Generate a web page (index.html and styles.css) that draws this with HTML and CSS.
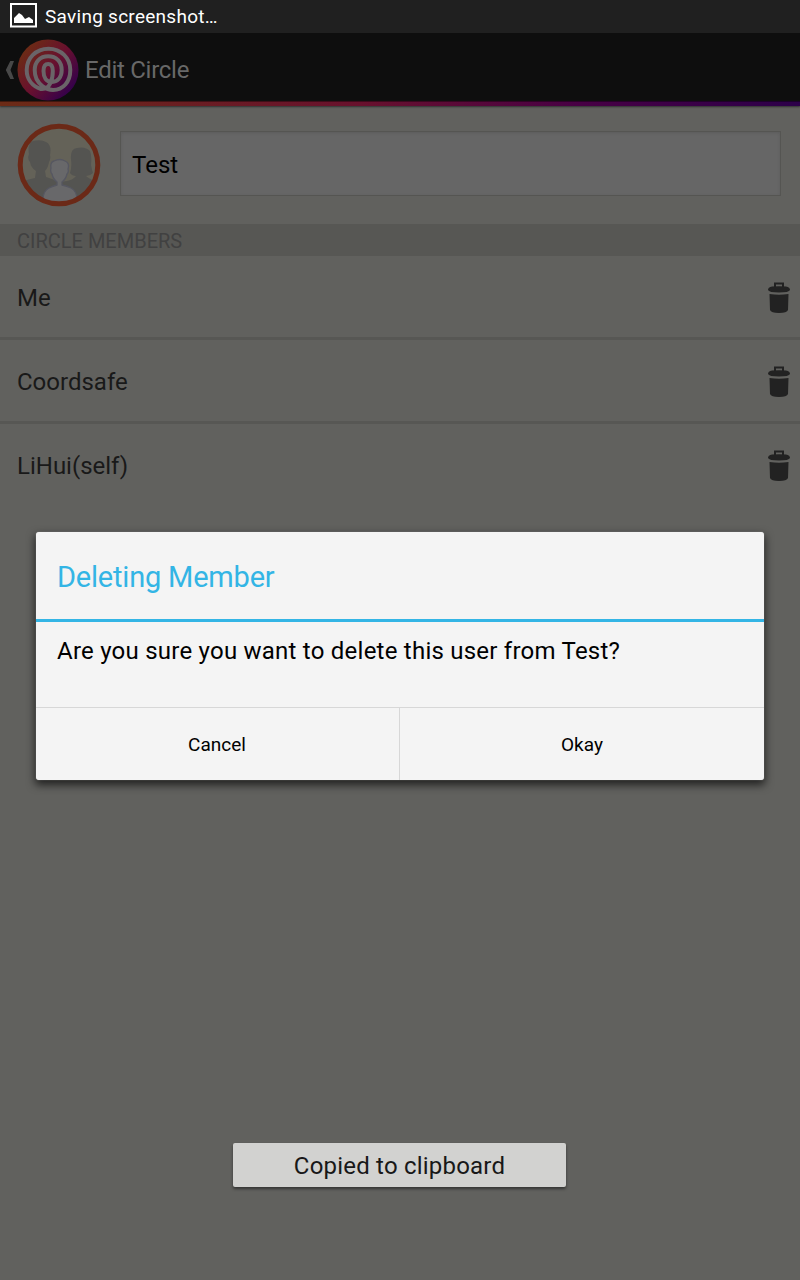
FILE: index.html
```html
<!DOCTYPE html>
<html lang="en">
<head>
<meta charset="utf-8">
<title>Edit Circle</title>
<link rel="stylesheet" href="styles.css">
</head>
<body>
<div class="screen">
  <div class="status">
    <svg class="status-icon" width="27" height="25" viewBox="0 0 27 25"><path d="M1 1H26V23.500H1Z" fill="none" stroke="#fff" stroke-width="2"/><path d="M4 20V15L9 10L12 12L15 16L19 14L23 17V20Z" fill="#fff"/></svg>
    <span class="status-text">Saving screenshot…</span>
  </div>
  <header class="bar">
    <svg class="back" width="10" height="20" viewBox="0 0 10 20"><path d="M6.300 1H10L6.500 10L10 19H6.300L1.800 10Z" fill="#484848"/></svg>
    <svg class="logo" width="62" height="62" viewBox="0 0 62 62">
      <defs><linearGradient id="lg" x1="0.1" y1="0.15" x2="0.9" y2="0.85"><stop offset="0" stop-color="#6c2c14"/><stop offset=".5" stop-color="#68102e"/><stop offset="1" stop-color="#32004c"/></linearGradient></defs>
      <circle cx="31" cy="31" r="30.500" fill="url(#lg)"/>
      <path fill="none" stroke="#6a6468" stroke-width="4" stroke-linecap="round" stroke-linejoin="round" d="M24 50C15 47 9.700 40 9.700 31C9.700 19 19 9.700 31.500 9.700C44 9.700 53.300 19 53.300 31C53.300 43 46 51 36 51C28 51 22 45 19.500 40C18 37 17.700 34 17.700 31C17.700 23 23 17.300 31.200 17.300C39.500 17.300 44.700 23 44.700 31C44.700 38 41 42.500 35 43C29 43 26.500 38 26.500 32C26.500 27.500 28 25 31.200 25C34.300 25 35.800 27.500 35.800 32C35.800 40 33 51 24 50"/>
    </svg>
    <h1 class="bar-title">Edit Circle</h1>
  </header>
  <div class="stripe"></div>
  <section class="profile">
    <svg class="avatar" width="84" height="84" viewBox="0 0 84 84">
      <defs><clipPath id="face"><circle cx="42" cy="42" r="38"/></clipPath></defs>
      <circle cx="42" cy="42" r="38" fill="#646258"/>
      <g clip-path="url(#face)">
        <path fill="#545451" d="M0 84V60Q8 57 18 55L19 48Q14 45 13 39Q10 36 12 31Q10 21 16 18Q24 16 29 19Q35 22 33 32Q34 36 32 39Q31 45 28 48L29 54Q36 56 42 59L50 58Q56 57 59 53Q55 53 53 50Q55 45 54 36Q53 26 60 25Q68 23 73 28Q75 32 74 42Q75 47 76 50Q73 53 69 53Q73 57 84 60V84Z"/>
        <path fill="#68686a" stroke="#565761" stroke-width="1.300" d="M26 84V77Q26 68 32 65Q36 63 40 62V59Q36 56 35 51Q33 49 34 45Q33 39 37 38Q43 35 48 38Q53 40 51 46Q52 49 50 51Q49 56 45 59V62Q50 63 54 65Q60 68 60 77V84Z"/>
      </g>
      <circle cx="42" cy="42" r="38.800" fill="none" stroke="#6b2917" stroke-width="5"/>
    </svg>
    <div class="name-field"><span class="t-test">Test</span></div>
  </section>
  <div class="section-head"><span class="t-section">CIRCLE MEMBERS</span></div>
  <ul class="members">
    <li class="member"><span class="t-me">Me</span><svg class="trash" width="22" height="32" viewBox="0 0 22 32"><path d="M7 6V1.500H15V6" fill="none" stroke="#222" stroke-width="2"/><path d="M0 8Q0 5 4 4.500Q11 4 18 4.500Q22 5 22 8Q21 10.500 11 10.500Q1 10.500 0 8Z"/><path d="M1.500 12Q11 13.500 20.500 12L20 28Q19 31 11 31Q3 31 2 28Z"/></svg></li>
    <li class="member"><span class="t-coord">Coordsafe</span><svg class="trash" width="22" height="32" viewBox="0 0 22 32"><path d="M7 6V1.500H15V6" fill="none" stroke="#222" stroke-width="2"/><path d="M0 8Q0 5 4 4.500Q11 4 18 4.500Q22 5 22 8Q21 10.500 11 10.500Q1 10.500 0 8Z"/><path d="M1.500 12Q11 13.500 20.500 12L20 28Q19 31 11 31Q3 31 2 28Z"/></svg></li>
    <li class="member"><span class="t-lihui">LiHui(self)</span><svg class="trash" width="22" height="32" viewBox="0 0 22 32"><path d="M7 6V1.500H15V6" fill="none" stroke="#222" stroke-width="2"/><path d="M0 8Q0 5 4 4.500Q11 4 18 4.500Q22 5 22 8Q21 10.500 11 10.500Q1 10.500 0 8Z"/><path d="M1.500 12Q11 13.500 20.500 12L20 28Q19 31 11 31Q3 31 2 28Z"/></svg></li>
  </ul>
  <div class="dialog">
    <h2 class="dialog-title"><span class="t-title">Deleting Member</span></h2>
    <p class="dialog-body"><span class="t-body">Are you sure you want to delete this user from Test?</span></p>
    <div class="actions"><div class="action"><span class="t-cancel">Cancel</span></div><div class="action"><span class="t-okay">Okay</span></div></div>
  </div>
  <div class="toast"><span class="t-toast">Copied to clipboard</span></div>
</div>
</body>
</html>
```
FILE: styles.css
```css
* { box-sizing: border-box; }
body { margin: 0; font-family: Roboto, "Liberation Sans", sans-serif; }
h1, h2, p, ul { margin: 0; padding: 0; font-weight: 400; }
svg { display: block; flex: none; }
span { white-space: nowrap; }
.screen { position: relative; width: 800px; height: 1280px; background: #61615e; overflow: hidden; }
.status { height: 33px; background: #202020; display: flex; align-items: center; padding-left: 10px; gap: 8px; color: #fff; font-size: 19px; letter-spacing: .27px; }
.status-icon { margin-top: -3px; }
.bar { height: 68px; background: #0e0e0e; display: flex; align-items: center; padding: 5px 0 0 4px; }
.logo { margin-left: 3px; }
.bar-title { margin-left: 6px; font-size: 24px; color: #686868; line-height: 30px; letter-spacing: -.27px; padding-top: 1px; }
.stripe { height: 5px; background: linear-gradient(90deg, #6c2b16, #68112d 45%, #480044 72%, #2c0049); border-top: 1px solid rgba(0,0,0,.4); box-shadow: 0 1px 2px #333; }
.profile { height: 118px; display: flex; align-items: center; padding: 0 19px 0 17px; gap: 19px; }
.name-field { flex: 1; height: 65px; margin-top: -3px; background: #666; border: 1px solid #555552; box-shadow: inset 0 1px 3px #5c5c5c; display: flex; align-items: center; padding: 2px 0 0 11px; font-size: 24px; color: #000; }
.section-head { height: 32px; background: #575754; display: flex; align-items: center; padding: 2px 0 0 17px; font-size: 20px; color: #414141; }
.members { list-style: none; }
.member { height: 84px; display: flex; align-items: center; justify-content: space-between; padding: 2px 10.5px 0 17px; font-size: 24px; color: #191919; border-bottom: 3px solid #575754; }
.member:last-child { border-bottom-color: transparent; }
.trash { fill: #222; }
.dialog { position: absolute; left: 36px; top: 532px; width: 728px; height: 248px; background: #f4f4f4; border-radius: 3px; box-shadow: 0 0 1px #bbb, 0 4px 8px 1px rgba(0,0,0,.65); }
.dialog-title { height: 90px; border-bottom: 3px solid #33b5e5; display: flex; align-items: center; padding: 3px 0 0 21px; color: #33b5e5; font-size: 29px; letter-spacing: -.2px; }
.dialog-body { height: 85px; padding: 14px 21px; font-size: 24px; line-height: 30px; color: #000; letter-spacing: .235px; }
.actions { display: grid; grid-template-columns: 364px 1fr; height: 73px; border-top: 1px solid #d7d7d7; }
.action { display: flex; align-items: center; justify-content: center; font-size: 19px; color: #000; padding-top: 1px; }
.action:first-child { border-right: 1px solid #d7d7d7; padding-right: 1px; }
.toast { position: absolute; left: 233px; top: 1143px; width: 333px; height: 44px; border-radius: 2px; background: #d2d2d0; box-shadow: 0 2px 3px rgba(0,0,0,.45); display: flex; align-items: center; justify-content: center; padding-top: 2px; font-size: 24px; color: #181818; letter-spacing: .2px; }
```
